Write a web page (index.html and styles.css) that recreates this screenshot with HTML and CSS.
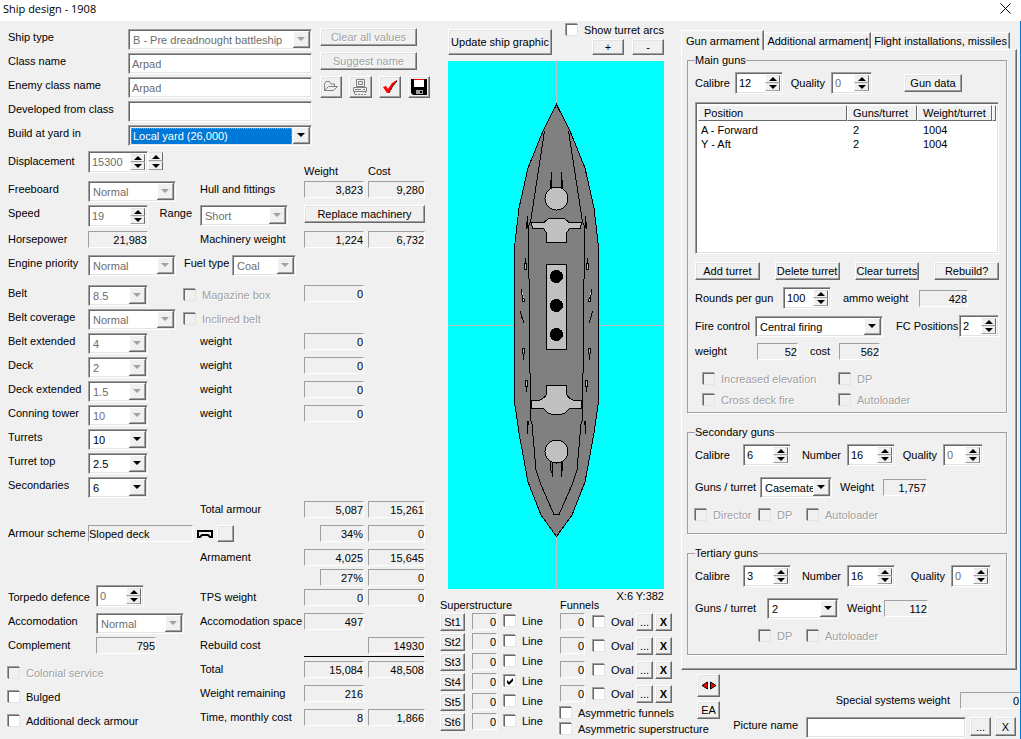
FILE: index.html
```
<!DOCTYPE html>
<html lang="en">
<head>
  <meta charset="UTF-8" />
  <meta name="viewport" content="width=device-width, initial-scale=1.0" />
  <title>Ship design - 1908</title>
  <link rel="stylesheet" href="styles.css">
</head>
<body>
  <header class="titlebar">
    <h1>Ship design - 1908</h1>
    <button class="close-button" aria-label="Close">
      <svg width="11" height="11" viewBox="0 0 11 11"><path d="M0.5 0.5 L10.5 10.5 M10.5 0.5 L0.5 10.5" stroke="#000" fill="none"/></svg>
    </button>
  </header>

  <main class="window">
    <!-- Ship parameters -->
    <section class="design">
      <div class="head">
        <div class="head-fields">
          <label for="shipType">Ship type</label>
          <select id="shipType" disabled><option>B - Pre dreadnought battleship</option></select>
          <label for="className">Class name</label>
          <input type="text" id="className" value="Arpad" disabled>
          <label for="enemyName">Enemy class name</label>
          <input type="text" id="enemyName" value="Arpad" disabled>
          <label for="developed">Developed from class</label>
          <input type="text" id="developed">
          <label for="yard">Build at yard in</label>
          <span class="focused"><select id="yard"><option>Local yard (26,000)</option></select></span>
        </div>
        <div class="head-buttons">
          <button class="btn" disabled>Clear all values</button>
          <button class="btn" disabled>Suggest name</button>
          <div class="toolbar">
            <button class="btn" aria-label="Open">
              <svg width="16" height="16" viewBox="0 0 16 16"><path d="M1.5 11.5 V5 L3 2.5 H6.500 L8 5 H11.500 V7.500 M1.500 11.500 L5.500 7.500 H14.500 L10.500 11.500 Z" fill="none" stroke="#808080"/></svg>
            </button>
            <button class="btn" aria-label="Print">
              <svg width="16" height="16" viewBox="0 0 16 16" fill="none" stroke="#808080"><path d="M4.500 0.500 H12.500 V7.500 H4.500 Z M6.500 2.500 H10.500 V5.500 H6.500 Z M1.500 8.500 H14.500 V12.500 H1.500 Z M3 10.500 H9 M11 10.500 H13"/><path d="M2.500 13 V15.500 H13.500 V13" stroke-dasharray="2 1"/></svg>
            </button>
            <button class="btn" aria-label="Accept">
              <svg width="16" height="16" viewBox="0 0 16 16"><path d="M1 8 L4 7 L6 10 L10 4 L15 1 V2 L11 7 L7 14 H5 Z" fill="#f00"/><path d="M15 2 L11 7 L7 14" stroke="#000" fill="none" stroke-dasharray="2 1"/></svg>
            </button>
            <button class="btn" aria-label="Save">
              <svg width="16" height="16" viewBox="0 0 16 16"><path d="M0 0 H16 V16 H2 L0 14 Z" fill="#000"/><rect x="3" y="0" width="10" height="8" fill="#fff"/><rect x="3" y="0" width="10" height="1" fill="#f00"/><rect x="5" y="11" width="7" height="4" fill="#a0a0a0"/><rect x="9" y="12" width="2" height="2" fill="#000"/></svg>
            </button>
          </div>
        </div>
      </div>

      <div class="row row-tall">
        <label for="displacement">Displacement</label>
        <span class="cell">
          <span class="spin w60"><input type="text" id="displacement" value="15300" disabled><span class="updown"><button aria-label="More"></button><button aria-label="Less"></button></span></span>
          <span class="updown updown-free"><button aria-label="Much more"></button><button aria-label="Much less"></button></span>
        </span>
        <span></span>
        <span class="col-head">Weight</span>
        <span class="col-head">Cost</span>
      </div>
      <div class="row">
        <label for="freeboard">Freeboard</label>
        <span class="cell"><select id="freeboard" class="w88" disabled><option>Normal</option></select></span>
        <span>Hull and fittings</span>
        <output>3,823</output>
        <output>9,280</output>
      </div>
      <div class="row row-range">
        <label for="speed">Speed</label>
        <span class="cell">
          <span class="spin w60"><input type="text" id="speed" value="19" disabled><span class="updown"><button aria-label="Faster"></button><button aria-label="Slower"></button></span></span>
          <label class="push" for="range">Range</label>
        </span>
        <select id="range" class="w88" disabled><option>Short</option></select>
        <button class="btn wide">Replace machinery</button>
      </div>
      <div class="row row-low">
        <span>Horsepower</span>
        <span class="cell"><output class="w60">21,983</output></span>
        <span>Machinery weight</span>
        <output>1,224</output>
        <output>6,732</output>
      </div>
      <div class="row row-engine">
        <label for="engine">Engine priority</label>
        <span class="cell spread">
          <select id="engine" class="w88" disabled><option>Normal</option></select>
          <label class="fuel" for="fuel">Fuel type</label>
          <select id="fuel" class="w64" disabled><option>Coal</option></select>
        </span>
      </div>
      <div class="row">
        <label for="belt">Belt</label>
        <span class="cell spread span2">
          <select id="belt" class="w60" disabled><option>8.5</option></select>
          <label class="check off after-short"><input type="checkbox" disabled>Magazine box</label>
        </span>
        <output>0</output>
      </div>
      <div class="row">
        <label for="coverage">Belt coverage</label>
        <span class="cell spread span2">
          <select id="coverage" class="w88" disabled><option>Normal</option></select>
          <label class="check off"><input type="checkbox" disabled>Inclined belt</label>
        </span>
      </div>
      <div class="row">
        <label for="beltExt">Belt extended</label>
        <span class="cell"><select id="beltExt" class="w60" disabled><option>4</option></select></span>
        <span>weight</span>
        <output>0</output>
      </div>
      <div class="row">
        <label for="deck">Deck</label>
        <span class="cell"><select id="deck" class="w60" disabled><option>2</option></select></span>
        <span>weight</span>
        <output>0</output>
      </div>
      <div class="row">
        <label for="deckExt">Deck extended</label>
        <span class="cell"><select id="deckExt" class="w60" disabled><option>1.5</option></select></span>
        <span>weight</span>
        <output>0</output>
      </div>
      <div class="row">
        <label for="tower">Conning tower</label>
        <span class="cell"><select id="tower" class="w60" disabled><option>10</option></select></span>
        <span>weight</span>
        <output>0</output>
      </div>
      <div class="row">
        <label for="turrets">Turrets</label>
        <span class="cell"><select id="turrets" class="w60"><option>10</option></select></span>
      </div>
      <div class="row">
        <label for="turretTop">Turret top</label>
        <span class="cell"><select id="turretTop" class="w60"><option>2.5</option></select></span>
      </div>
      <div class="row">
        <label for="secondaries">Secondaries</label>
        <span class="cell"><select id="secondaries" class="w60"><option>6</option></select></span>
      </div>
      <div class="row row-total">
        <span></span>
        <span></span>
        <span>Total armour</span>
        <output>5,087</output>
        <output>15,261</output>
      </div>
      <div class="row row-low row-scheme">
        <span>Armour scheme</span>
        <span class="cell">
          <output class="text">Sloped deck</output>
          <svg width="16" height="8" viewBox="0 0 16 8"><path d="M1 1 H15 V7 H13 L11 5 H5 L3 7 H1 Z" fill="#f0f0f0" stroke="#000" stroke-width="2"/></svg>
          <button class="btn square" aria-label="Change armour scheme"></button>
        </span>
        <output class="short">34%</output>
        <output>0</output>
      </div>
      <div class="row row-low">
        <span></span>
        <span></span>
        <span>Armament</span>
        <output>4,025</output>
        <output>15,645</output>
      </div>
      <div class="row row-tight">
        <span></span>
        <span></span>
        <span></span>
        <output class="short">27%</output>
        <output>0</output>
      </div>
      <div class="row row-low">
        <label for="torpedo">Torpedo defence</label>
        <span class="cell indent">
          <span class="spin w48"><input type="text" id="torpedo" value="0" disabled><span class="updown"><button aria-label="More"></button><button aria-label="Less"></button></span></span>
        </span>
        <span>TPS weight</span>
        <output>0</output>
        <output>0</output>
      </div>
      <div class="row row-low">
        <label for="accomodation">Accomodation</label>
        <span class="cell indent"><select id="accomodation" class="w88" disabled><option>Normal</option></select></span>
        <span>Accomodation space</span>
        <output>497</output>
      </div>
      <div class="row row-low">
        <span>Complement</span>
        <span class="cell indent"><output class="w60">795</output></span>
        <span>Rebuild cost</span>
        <span></span>
        <output>14930</output>
      </div>
      <div class="row row-low row-sum">
        <label class="check off option"><input type="checkbox" disabled>Colonial service</label>
        <span>Total</span>
        <output>15,084</output>
        <output>48,508</output>
      </div>
      <div class="row row-low">
        <label class="check option"><input type="checkbox">Bulged</label>
        <span>Weight remaining</span>
        <output>216</output>
      </div>
      <div class="row row-low">
        <label class="check option"><input type="checkbox">Additional deck armour</label>
        <span>Time, monthly cost</span>
        <output>8</output>
        <output>1,866</output>
      </div>
    </section>

    <!-- Ship graphic -->
    <section class="graphic">
      <div class="graphic-tools">
        <button class="btn update">Update ship graphic</button>
        <div class="arcs">
          <label class="check"><input type="checkbox">Show turret arcs</label>
          <div class="zoom"><button class="btn">+</button><button class="btn">-</button></div>
        </div>
      </div>
      <svg class="ship" viewBox="448 61 216 528" shape-rendering="crispEdges">
        <rect x="448" y="61" width="216" height="528" fill="#0ff"/>
        <path d="M556.500 61 V589 M448 325.500 H664" stroke="#c0c0c0"/>
        <g stroke="#000" fill="#808080">
          <path d="M556.500 104.500 L570 131 L585 168 L594 208 L598.500 247 V402 L594 433 L585 482 L572 515 L556.500 536.500 L541 515 L528 482 L519 433 L514.500 402 V247 L519 208 L528 168 L543 131 Z"/>
          <path d="M544.500 131 L530.500 222 L528.500 226 V278 L529.500 280 V372 L530.500 374 V420 L532 424 L536 470 L541 485 L554 514.500 H559 L572 485 L577 470 L581 424 L582.500 420 V374 L583.500 372 V280 L584.500 278 V226 L582.500 222 L568.500 131" fill="none"/>
        </g>
        <g stroke="#000" fill="#c0c0c0">
          <path d="M551.500 172 V187 H561.500 V172 M550.500 180 V190 M562.500 180 V190" fill="none"/>
          <circle cx="556.500" cy="198.500" r="11.500"/>
          <path d="M548.500 218.500 H564.500 L569 222.500 H581.500 L580.500 228.500 H569.500 L566.500 233 V242.500 H546.500 V233 L543.500 228.500 H532.500 L531.500 222.500 H544 Z"/>
          <path d="M546.500 264.500 H566.500 V349.500 H546.500 Z"/>
          <path d="M546.500 385.500 H566.500 V394 Q568 398 574 400.500 H581.500 V408.500 H569.500 L565 413 L560 414.500 H553 L548 413 L543.500 408.500 H531.500 V400.500 H539 Q545 398 546.500 394 Z"/>
          <circle cx="556.500" cy="451.500" r="11.500"/>
          <path d="M552.500 477 V462.500 H561.500 V477 M550.500 461 V468 L551.500 473 M562.500 461 V468 L561.500 473" fill="none"/>
        </g>
        <g fill="#000">
          <circle cx="556.500" cy="276.500" r="6.500"/>
          <circle cx="556.500" cy="305.500" r="6.500"/>
          <circle cx="556.500" cy="334.500" r="6.500"/>
        </g>
        <g id="casemates" stroke="#000" fill="#c0c0c0">
          <path d="M527.500 216 V228 M526.500 222 V229 M525.500 258 V263 M524.500 263 H526.500 V269.500 H524.500 Z"/>
          <path d="M521.500 289 L522.500 301 H525 M522 296 L525 301 M520.500 311 L521.500 316 L524 323 M525 348 L523 360 M525 348 H522.500 V354"/>
          <path d="M525.500 380.500 H527.500 V386 H525.500 Z M526.500 386 V392 M527.500 421 V434 M528.500 421 V425"/>
        </g>
        <use href="#casemates" transform="translate(1113 0) scale(-1 1)"/>
      </svg>
      <p class="coords">X:6 Y:382</p>
      <div class="parts">
        <div class="superstructure">
          <h2>Superstructure</h2>
          <div class="st-row"><button class="btn">St1</button><output>0</output><label class="check"><input type="checkbox">Line</label></div>
          <div class="st-row"><button class="btn">St2</button><output>0</output><label class="check"><input type="checkbox">Line</label></div>
          <div class="st-row"><button class="btn">St3</button><output>0</output><label class="check"><input type="checkbox">Line</label></div>
          <div class="st-row"><button class="btn">St4</button><output>0</output><label class="check"><input type="checkbox" checked>Line</label></div>
          <div class="st-row"><button class="btn">St5</button><output>0</output><label class="check"><input type="checkbox">Line</label></div>
          <div class="st-row"><button class="btn">St6</button><output>0</output><label class="check"><input type="checkbox">Line</label></div>
        </div>
        <div class="funnels">
          <h2>Funnels</h2>
          <div class="funnel-row"><output>0</output><label class="check"><input type="checkbox">Oval</label><button class="btn">...</button><button class="btn bold">X</button></div>
          <div class="funnel-row"><output>0</output><label class="check"><input type="checkbox">Oval</label><button class="btn">...</button><button class="btn bold">X</button></div>
          <div class="funnel-row"><output>0</output><label class="check"><input type="checkbox">Oval</label><button class="btn">...</button><button class="btn bold">X</button></div>
          <div class="funnel-row"><output>0</output><label class="check"><input type="checkbox">Oval</label><button class="btn">...</button><button class="btn bold">X</button></div>
          <label class="check"><input type="checkbox">Asymmetric funnels</label>
          <label class="check"><input type="checkbox">Asymmetric superstructure</label>
        </div>
      </div>
    </section>

    <!-- Armament -->
    <section class="armament">
      <div class="tabs" role="tablist">
        <button class="tab active" role="tab" aria-selected="true">Gun armament</button>
        <button class="tab" role="tab">Additional armament</button>
        <button class="tab" role="tab">Flight installations, missiles</button>
      </div>
      <div class="panel" role="tabpanel">
        <fieldset>
          <legend>Main guns</legend>
          <div class="line main-line">
            <label for="mainCal">Calibre</label>
            <span class="spin"><input type="text" id="mainCal" value="12"><span class="updown"><button aria-label="More"></button><button aria-label="Less"></button></span></span>
            <label for="mainQ">Quality</label>
            <span class="spin"><input type="text" id="mainQ" value="0" disabled><span class="updown"><button aria-label="More"></button><button aria-label="Less"></button></span></span>
            <button class="btn">Gun data</button>
          </div>
          <div class="list">
            <table>
              <thead>
                <tr><th class="pos">Position</th><th class="guns">Guns/turret</th><th class="wt">Weight/turret</th><th></th></tr>
              </thead>
              <tbody>
                <tr><td>A - Forward</td><td>2</td><td>1004</td><td></td></tr>
                <tr><td>Y - Aft</td><td>2</td><td>1004</td><td></td></tr>
              </tbody>
            </table>
          </div>
          <div class="turret-buttons">
            <button class="btn">Add turret</button>
            <button class="btn">Delete turret</button>
            <button class="btn">Clear turrets</button>
            <button class="btn">Rebuild?</button>
          </div>
          <div class="line ammo-line">
            <label for="rounds">Rounds per gun</label>
            <span class="spin"><input type="text" id="rounds" value="100"><span class="updown"><button aria-label="More"></button><button aria-label="Less"></button></span></span>
            <span>ammo weight</span>
            <output>428</output>
          </div>
          <div class="line fire-line">
            <label for="fire">Fire control</label>
            <select id="fire"><option>Central firing</option></select>
            <label for="fcPos">FC Positions</label>
            <span class="spin"><input type="text" id="fcPos" value="2"><span class="updown"><button aria-label="More"></button><button aria-label="Less"></button></span></span>
          </div>
          <div class="line cost-line">
            <span>weight</span><output>52</output><span>cost</span><output>562</output>
          </div>
          <div class="main-checks">
            <label class="check off"><input type="checkbox" disabled>Increased elevation</label>
            <label class="check off"><input type="checkbox" disabled>DP</label>
            <label class="check off"><input type="checkbox" disabled>Cross deck fire</label>
            <label class="check off"><input type="checkbox" disabled>Autoloader</label>
          </div>
        </fieldset>

        <fieldset class="battery">
          <legend>Secondary guns</legend>
          <div class="line battery-line">
            <label for="secCal">Calibre</label>
            <span class="spin"><input type="text" id="secCal" value="6"><span class="updown"><button aria-label="More"></button><button aria-label="Less"></button></span></span>
            <label for="secNum">Number</label>
            <span class="spin"><input type="text" id="secNum" value="16"><span class="updown"><button aria-label="More"></button><button aria-label="Less"></button></span></span>
            <label for="secQ">Quality</label>
            <span class="spin"><input type="text" id="secQ" value="0" disabled><span class="updown"><button aria-label="More"></button><button aria-label="Less"></button></span></span>
          </div>
          <div class="line turret-line">
            <label for="secTurret">Guns / turret</label>
            <select id="secTurret"><option>Casemates</option></select>
            <span>Weight</span>
            <output>1,757</output>
          </div>
          <div class="battery-checks">
            <label class="check off"><input type="checkbox" disabled>Director</label>
            <label class="check off"><input type="checkbox" disabled>DP</label>
            <label class="check off"><input type="checkbox" disabled>Autoloader</label>
          </div>
        </fieldset>

        <fieldset class="battery tertiary">
          <legend>Tertiary guns</legend>
          <div class="line battery-line">
            <label for="terCal">Calibre</label>
            <span class="spin"><input type="text" id="terCal" value="3"><span class="updown"><button aria-label="More"></button><button aria-label="Less"></button></span></span>
            <label for="terNum">Number</label>
            <span class="spin"><input type="text" id="terNum" value="16"><span class="updown"><button aria-label="More"></button><button aria-label="Less"></button></span></span>
            <label for="terQ">Quality</label>
            <span class="spin"><input type="text" id="terQ" value="0" disabled><span class="updown"><button aria-label="More"></button><button aria-label="Less"></button></span></span>
          </div>
          <div class="line turret-line">
            <label for="terTurret">Guns / turret</label>
            <select id="terTurret"><option>2</option></select>
            <span>Weight</span>
            <output>112</output>
          </div>
          <div class="battery-checks">
            <span></span>
            <label class="check off"><input type="checkbox" disabled>DP</label>
            <label class="check off"><input type="checkbox" disabled>Autoloader</label>
          </div>
        </fieldset>
      </div>

      <div class="bottom">
        <div class="bottom-buttons">
          <button class="btn flip" aria-label="Flip">
            <svg width="16" height="9" viewBox="0 0 16 9"><path d="M6.500 1 V8 L1 4.500 Z M9.500 1 V8 L15 4.500 Z" fill="#f00" stroke="#000"/></svg>
          </button>
          <button class="btn">EA</button>
        </div>
        <div class="bottom-fields">
          <div class="special"><span>Special systems weight</span><output>0</output></div>
          <div class="picture">
            <label for="pictureName">Picture name</label>
            <input type="text" id="pictureName">
            <button class="btn">...</button>
            <button class="btn">X</button>
          </div>
        </div>
      </div>
    </section>
  </main>
</body>
</html>
```
FILE: styles.css
```
* {
  box-sizing: border-box;
}

body {
  margin: 0;
  background-color: #f0f0f0;
  font-family: "Liberation Sans", Arial, sans-serif;
  font-size: 11px;
  line-height: 16px;
  color: #000;
  white-space: nowrap;
}

button, input, select, output {
  font: inherit;
  color: inherit;
  margin: 0;
  border-radius: 0;
}

h2, p {
  margin: 0;
  font-size: 11px;
  font-weight: normal;
}

/* title bar */
.titlebar {
  display: flex;
  justify-content: space-between;
  align-items: center;
  height: 21px;
  padding: 0 10px 4px 3px;
  background-color: #fff;
}

.titlebar h1 {
  margin: 0;
  font-family: "Open Sans", sans-serif;
  font-size: 11px;
  font-weight: normal;
}

.close-button {
  display: flex;
  padding: 0;
  border: none;
  background: none;
}

.window {
  display: grid;
  grid-template-columns: 440px 240px minmax(0, 1fr);
  min-height: calc(100vh - 21px);
  border-right: 1px solid #0078d7;
}

/* controls */
.btn {
  display: flex;
  align-items: center;
  justify-content: center;
  height: 18px;
  padding: 0;
  line-height: 14px;
  background-color: #f0f0f0;
  border: 1px solid;
  border-color: #fff #696969 #696969 #fff;
  box-shadow: inset -1px -1px #a0a0a0, inset 1px 1px #e3e3e3;
}

.btn:disabled {
  color: #a0a0a0;
  text-shadow: 1px 1px #fff;
}

.bold {
  font-weight: bold;
}

input[type="text"], select {
  width: 100%;
  height: 21px;
  padding: 0 3px;
  background-color: #fff;
  border: 1px solid;
  border-color: #a0a0a0 #fff #fff #a0a0a0;
  box-shadow: inset 1px 1px #696969, inset -1px -1px #e3e3e3;
  outline: none;
}

input[type="text"]:disabled, select:disabled {
  color: #6d6d6d;
  opacity: 1;
}

select {
  appearance: none;
  padding: 1px 18px 0 4px;
  background: #fff url("data:image/svg+xml,%3Csvg xmlns='http://www.w3.org/2000/svg' width='17' height='17'%3E%3Cpath d='M0 0h17v17H0z' fill='%23696969'/%3E%3Cpath d='M0 0h16v16H0z' fill='%23fff'/%3E%3Cpath d='M1 1h15v15H1z' fill='%23a0a0a0'/%3E%3Cpath d='M1 1h14v14H1z' fill='%23f0f0f0'/%3E%3Cpath d='M4 6h8L8 10z' fill='%23000'/%3E%3C/svg%3E") no-repeat right 1px top 1px;
}

select:disabled {
  background-image: url("data:image/svg+xml,%3Csvg xmlns='http://www.w3.org/2000/svg' width='17' height='17'%3E%3Cpath d='M0 0h17v17H0z' fill='%23696969'/%3E%3Cpath d='M0 0h16v16H0z' fill='%23fff'/%3E%3Cpath d='M1 1h15v15H1z' fill='%23a0a0a0'/%3E%3Cpath d='M1 1h14v14H1z' fill='%23f0f0f0'/%3E%3Cpath d='M4 6h8L8 10z' fill='%23a0a0a0'/%3E%3C/svg%3E");
}

.focused {
  position: relative;
  display: flex;
}

.focused::before {
  content: "";
  position: absolute;
  inset: 3px 20px 3px 3px;
  height: 16px;
  border: 1px dotted #ff8728;
  background-color: #0078d7;
}

.focused select {
  position: relative;
  color: #fff;
  background-color: transparent;
}

.focused option {
  color: #000;
}

output {
  display: block;
  height: 17px;
  line-height: 16px;
  text-align: right;
  border: 1px solid;
  border-color: #a0a0a0 #fff #fff #a0a0a0;
}

.spin {
  display: flex;
  height: 22px;
  padding: 2px;
  background-color: #fff;
  border: 1px solid;
  border-color: #a0a0a0 #fff #fff #a0a0a0;
  box-shadow: inset 1px 1px #696969, inset -1px -1px #e3e3e3;
}

.spin input[type="text"] {
  flex: 1;
  width: 0;
  height: 16px;
  padding: 0 1px;
  border: none;
  box-shadow: none;
}

.updown {
  display: flex;
  flex-direction: column;
  width: 15px;
}

.updown button {
  flex: 1;
  display: flex;
  align-items: center;
  justify-content: center;
  min-height: 0;
  padding: 0;
  background-color: #f0f0f0;
  border: 1px solid;
  border-color: #e3e3e3 #696969 #a0a0a0 #fff;
}

.updown button::before {
  content: "";
  border: 4px solid transparent;
  border-top-width: 0;
  border-bottom-color: #000;
}

.updown button:last-child::before {
  border-width: 4px 4px 0;
  border-top-color: #000;
}

.updown-free {
  height: 18px;
  margin-top: 1px;
}

.check {
  display: flex;
  align-items: center;
  gap: 6px;
}

.check input {
  appearance: none;
  flex: none;
  width: 12px;
  height: 12px;
  background-color: #fff;
  border: 1px solid;
  border-color: #696969 #e3e3e3 #e3e3e3 #696969;
  box-shadow: -1px -1px #a0a0a0;
}

.check input:checked {
  background-image: url("data:image/svg+xml,%3Csvg xmlns='http://www.w3.org/2000/svg' width='10' height='10'%3E%3Cpath d='M2 4l2 2 4-4v3L4 9 2 7z'/%3E%3C/svg%3E");
}

.check.off {
  color: #a0a0a0;
  text-shadow: 1px 1px #fff;
}

.check.off input {
  background-color: #f0f0f0;
}

.w48 { width: 48px; }
.w60, select.w60 { width: 60px; }
select.w64 { width: 64px; }
select.w88 { width: 88px; }

/* left side */
.design {
  padding: 6px 15px 0 8px;
}

.head {
  display: flex;
  gap: 8px;
}

.head-fields {
  display: grid;
  grid-template-columns: 120px 184px;
  grid-auto-rows: 24px;
  padding-top: 2px;
}

.head-buttons {
  width: 110px;
}

.head-buttons > .btn {
  width: 97px;
  margin: 1px 0 6px;
}

.toolbar {
  display: flex;
  gap: 7px;
}

.toolbar .btn {
  width: 23px;
  height: 22px;
}

.row {
  display: grid;
  grid-template-columns: 80px 112px 104px 64px 57px;
  align-items: start;
  height: 24px;
  padding-top: 2px;
}

.row output {
  width: 60px;
}

.row > :nth-child(5),
.row-scheme > :last-child,
.row-sum > :last-child,
.row > .option ~ :nth-child(4) {
  width: 57px;
}

.row-tall {
  height: 30px;
}

.row-tall label {
  padding-top: 2px;
}

.row-tall .col-head {
  align-self: end;
}

.row-low {
  padding-top: 4px;
}

.row-engine {
  height: 32px;
  padding-top: 4px;
}

.row-engine .cell {
  grid-column: span 3;
}

.row-total {
  height: 22px;
}

.row-tight {
  height: 16px;
  padding-top: 0;
}

.cell {
  display: flex;
  align-items: start;
}

.push {
  margin-left: auto;
  padding-right: 8px;
}

.spread {
  gap: 8px;
}

.spread .check {
  padding-top: 2px;
}

.fuel {
  width: 40px;
}

.after-short {
  margin-left: 28px;
}

.span2 {
  grid-column: span 2;
}

.indent {
  padding-left: 8px;
}

.indent .spin {
  margin-top: -4px;
}

.wide {
  grid-column: span 2;
  width: 121px;
}

.row-scheme .cell {
  grid-column: span 2;
  align-items: center;
  gap: 4px;
}

.row-scheme .text {
  width: 105px;
  text-align: left;
}

.row-scheme .square {
  width: 17px;
  height: 17px;
}

.row .short {
  width: 44px;
  margin-left: 16px;
}

.option {
  grid-column: span 2;
  padding-top: 4px;
}

.row-sum output {
  position: relative;
}

.row-sum output::before {
  content: "";
  position: absolute;
  top: -6px;
  left: -1px;
  right: -5px;
  border-top: 1px solid #000;
}

.row-sum output:last-child::before {
  right: 0;
}

/* middle */
.graphic {
  padding-top: 2px;
}

.graphic-tools {
  display: flex;
  justify-content: space-between;
  height: 38px;
  padding: 0 16px 0 8px;
}

.update {
  width: 104px;
  height: 26px;
  margin-top: 6px;
}

.arcs .check {
  height: 14px;
}

.zoom {
  display: flex;
  justify-content: flex-end;
  gap: 8px;
  margin-top: 2px;
}

.zoom .btn {
  width: 32px;
  height: 16px;
}

.ship {
  display: block;
  width: 216px;
  height: 528px;
  margin-left: 8px;
}

.coords {
  height: 8px;
  line-height: 14px;
  padding-right: 16px;
  text-align: right;
}

.parts {
  display: flex;
  justify-content: space-between;
  padding-right: 8px;
}

.st-row {
  display: grid;
  grid-template-columns: 25px 25px 1fr;
  gap: 7px;
  height: 20px;
}

.st-row .check {
  height: 16px;
}

.funnels {
  width: 112px;
}

.funnel-row {
  display: flex;
  gap: 2px;
  height: 24px;
}

.funnel-row output {
  width: 25px;
  margin-right: 6px;
}

.funnel-row .check {
  height: 18px;
  flex: 1;
}

.funnel-row .btn {
  width: 17px;
}

.funnel-row:last-of-type {
  height: 20px;
}

.funnels > .check {
  height: 16px;
}

/* right side */
.armament {
  display: flex;
  flex-direction: column;
  padding: 9px 0 0 1px;
}

.tabs {
  display: flex;
  align-items: flex-end;
  height: 19px;
}

.tab {
  height: 17px;
  padding: 0 2px;
  line-height: 16px;
  background-color: #f0f0f0;
  border: 1px solid;
  border-color: #fff #696969 transparent #fff;
  box-shadow: inset -1px 0 #a0a0a0;
}

.tab.active {
  position: relative;
  height: 20px;
  margin-bottom: -1px;
  padding: 0 4px;
  border-bottom: none;
}

.panel {
  margin-right: 3px;
  padding: 4px 9px 14px 5px;
  border: 1px solid;
  border-color: #fff #696969 #696969 #fff;
  box-shadow: inset -1px -1px #a0a0a0;
}

fieldset {
  min-width: 0;
  margin: 0;
  padding: 5px 7px 2px;
  border: 1px solid #a0a0a0;
  box-shadow: 1px 1px #fff;
}

legend {
  padding: 0;
  line-height: 12px;
}

.line {
  display: grid;
  align-items: center;
  height: 24px;
}

.main-line {
  grid-template-columns: 40px 48px 48px 41px 1fr;
}

.main-line label:nth-of-type(2),
.battery-line label:nth-of-type(n+2) {
  justify-self: end;
  padding-right: 6px;
}

.main-line .btn {
  width: 58px;
  margin-left: 32px;
}

.list {
  height: 152px;
  margin: 7px 0 8px;
  padding: 2px;
  background-color: #fff;
  border: 1px solid;
  border-color: #a0a0a0 #fff #fff #a0a0a0;
  box-shadow: inset 1px 1px #696969, inset -1px -1px #e3e3e3;
}

.list table {
  width: 100%;
  table-layout: fixed;
  border-collapse: separate;
  border-spacing: 0;
}

.list th {
  height: 16px;
  padding: 0 0 0 5px;
  line-height: 14px;
  font-weight: normal;
  text-align: left;
  background-color: #f0f0f0;
  border: 1px solid;
  border-color: #fff #696969 #696969 #fff;
}

.list td {
  padding: 0 0 0 6px;
  line-height: 14px;
}

.list td:first-child {
  padding-left: 3px;
}

.list tbody tr:first-child td {
  padding-top: 2px;
}

.pos { width: 149px; }
.guns { width: 70px; }
.wt { width: 75px; }

.turret-buttons {
  display: grid;
  grid-template-columns: repeat(4, 1fr);
  gap: 15px;
  margin-bottom: 4px;
}

.ammo-line {
  grid-template-columns: 88px 48px 88px 49px;
  height: 28px;
}

.ammo-line span:nth-of-type(2) {
  padding-left: 12px;
}

.fire-line {
  grid-template-columns: 60px 128px 1fr 40px;
  height: 28px;
}

.fire-line label:nth-of-type(2) {
  padding-left: 13px;
}

.cost-line {
  grid-template-columns: 62px 41px 41px 41px;
  height: 22px;
}

.cost-line span:nth-of-type(2) {
  padding-left: 12px;
}

.main-checks {
  display: grid;
  grid-template-columns: 136px 1fr;
  grid-auto-rows: 21px;
  padding: 6px 0 0 8px;
}

.battery {
  margin-top: 13px;
  padding-bottom: 8px;
}

.battery-line {
  grid-template-columns: 48px 48px 56px 48px 48px 40px;
}

.turret-line {
  grid-template-columns: 65px 72px 51px 44px;
  margin-top: 8px;
}

.turret-line span {
  padding-left: 8px;
}

.battery-checks {
  display: grid;
  grid-template-columns: 64px 48px 1fr;
  grid-auto-rows: 20px;
  margin-top: 6px;
}

.tertiary .battery-line {
  grid-template-columns: 48px 48px 56px 48px 56px 40px;
}

.tertiary .turret-line {
  grid-template-columns: 72px 72px 45px 44px;
}

.bottom {
  display: flex;
  justify-content: space-between;
  padding: 4px 0 0 16px;
}

.bottom-buttons .btn {
  width: 23px;
}

.bottom-buttons .flip {
  height: 23px;
  margin-bottom: 4px;
}

.bottom-fields {
  padding-top: 18px;
}

.special {
  display: flex;
  justify-content: flex-end;
  gap: 10px;
  height: 25px;
}

.special output {
  width: 60px;
}

.picture {
  display: flex;
  gap: 4px;
  padding-right: 4px;
}

.picture label {
  padding-right: 4px;
}

.picture input[type="text"] {
  width: 160px;
}

.picture .btn {
  width: 21px;
  height: 19px;
}
```
